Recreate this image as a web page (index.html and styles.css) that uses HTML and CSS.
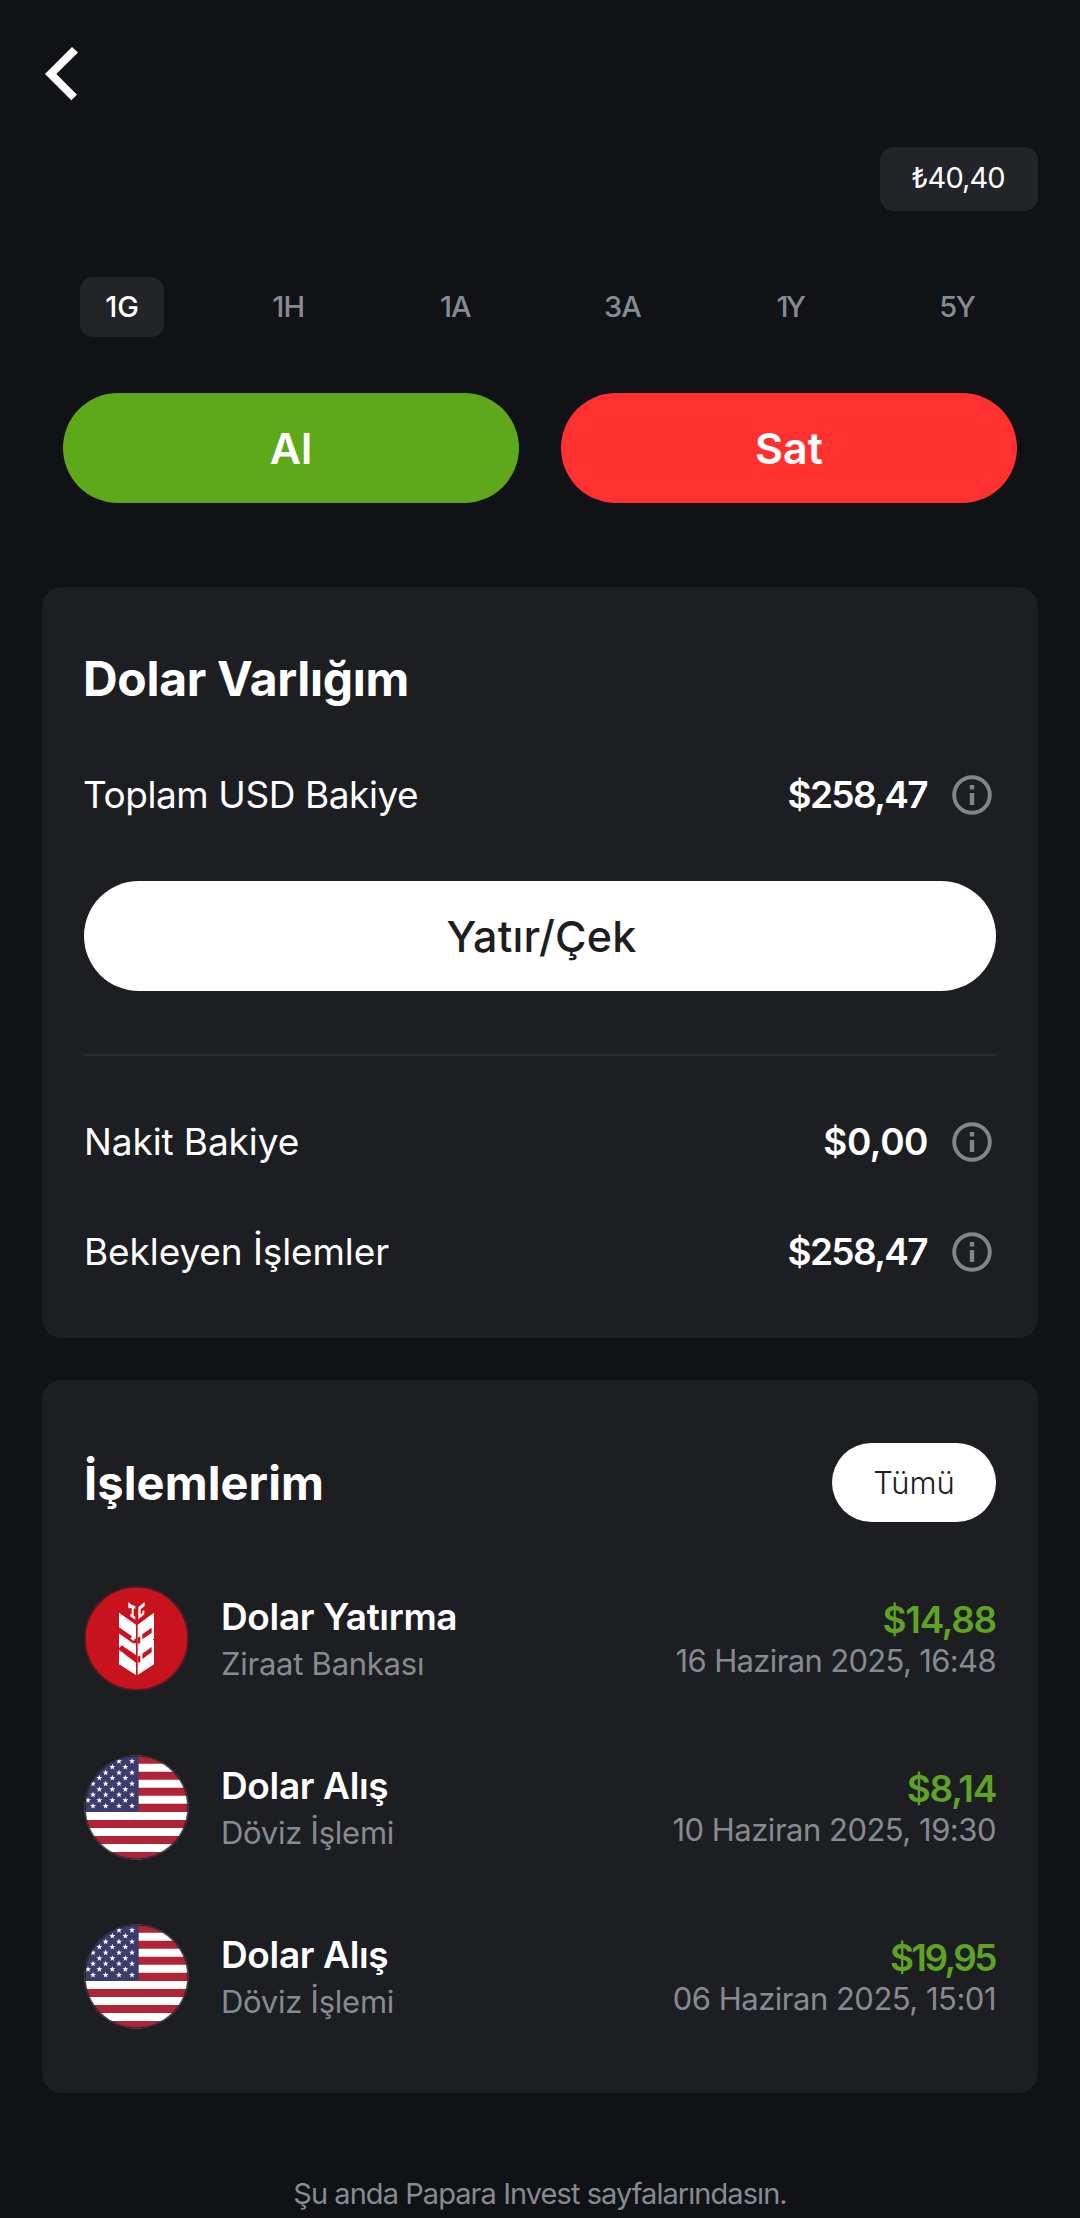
FILE: index.html
```html
<!DOCTYPE html>
<html lang="tr">
<head>
<meta charset="utf-8">
<title>Dolar</title>
<link rel="stylesheet" href="styles.css">
</head>
<body>
<svg class="defs" aria-hidden="true">
  <defs>
    <symbol id="info" viewBox="0 0 40 40">
      <circle cx="20" cy="20" r="17.8" fill="none" stroke="currentColor" stroke-width="3.9"/>
      <path d="M17.800 10h4.400v4.400h-4.400zM17.800 18h4.400v12h-4.400z" fill="currentColor"/>
    </symbol>
    <path id="star" d="M0-9.500 2.300-3 9-2.900 3.600 1.200 5.600 7.700 0 3.800-5.600 7.700-3.600 1.200-9-2.900-2.300-3z" fill="#fff"/>
    <clipPath id="disc"><circle cx="169.500" cy="169.500" r="156"/></clipPath>
    <symbol id="flag" viewBox="12 12 315 315">
      <g clip-path="url(#disc)">
        <path fill="#fff" d="M0 0h340v340H0z"/>
        <path fill="#af2436" d="M0 0h340v38H0zM0 62h340v24H0zM0 110h340v24H0zM0 158h340v25H0zM0 207h340v24H0zM0 255h340v24H0zM0 303h340v37H0z"/>
        <path fill="#3c3b6e" d="M0 0h176v183H0z"/>
        <use href="#star" x="117" y="31"/><use href="#star" x="156" y="31"/>
        <use href="#star" x="97" y="48"/><use href="#star" x="136" y="48"/>
        <use href="#star" x="77" y="65"/><use href="#star" x="117" y="65"/><use href="#star" x="156" y="65"/>
        <use href="#star" x="58" y="81"/><use href="#star" x="97" y="81"/><use href="#star" x="136" y="81"/>
        <use href="#star" x="39" y="98"/><use href="#star" x="77" y="98"/><use href="#star" x="117" y="98"/><use href="#star" x="156" y="98"/>
        <use href="#star" x="58" y="115"/><use href="#star" x="97" y="115"/><use href="#star" x="136" y="115"/>
        <use href="#star" x="39" y="131"/><use href="#star" x="77" y="131"/><use href="#star" x="117" y="131"/><use href="#star" x="156" y="131"/>
        <use href="#star" x="24" y="148"/><use href="#star" x="58" y="148"/><use href="#star" x="97" y="148"/><use href="#star" x="136" y="148"/>
        <use href="#star" x="39" y="165"/><use href="#star" x="77" y="165"/><use href="#star" x="117" y="165"/><use href="#star" x="156" y="165"/>
      </g>
      <circle cx="169.500" cy="169.500" r="154.500" fill="none" stroke="#242429" stroke-opacity=".8" stroke-width="5"/>
    </symbol>
  </defs>
</svg>

<main class="page">
  <header class="topbar">
    <button class="back" aria-label="Geri">
      <svg width="33" height="54" viewBox="0 0 33 54"><path fill="#fff" d="M27 0 33 5.500 11.300 27 32 47.700 26.300 53.300 0 27z"/></svg>
    </button>
  </header>

  <div class="price-row"><span class="price">₺40,40</span></div>

  <nav class="ranges">
    <button class="range active">1G</button>
    <button class="range">1H</button>
    <button class="range">1A</button>
    <button class="range">3A</button>
    <button class="range year">1Y</button>
    <button class="range five">5Y</button>
  </nav>

  <div class="actions">
    <button class="pill buy">Al</button>
    <button class="pill sell">Sat</button>
  </div>

  <section class="card assets">
    <h2>Dolar Varlığım</h2>
    <div class="row total">
      <span class="label">Toplam USD Bakiye</span>
      <strong class="value">$258,47</strong>
      <svg class="info"><use href="#info"/></svg>
    </div>
    <button class="pill transfer">Yatır/Çek</button>
    <hr>
    <div class="row">
      <span class="label">Nakit Bakiye</span>
      <strong class="value zero">$0,00</strong>
      <svg class="info"><use href="#info"/></svg>
    </div>
    <div class="row pending">
      <span class="label">Bekleyen İşlemler</span>
      <strong class="value">$258,47</strong>
      <svg class="info"><use href="#info"/></svg>
    </div>
  </section>

  <section class="card history">
    <div class="card-head">
      <h2>İşlemlerim</h2>
      <button class="all">Tümü</button>
    </div>
    <article class="tx">
      <svg class="avatar" viewBox="12 12 315 315">
        <circle cx="169.500" cy="169.500" r="154.500" fill="#c8131f" stroke="#541b22" stroke-width="5"/>
        <g fill="#fff">
          <path d="M117 92 168 128V279L117 247z"/>
          <path d="M222 92 173 128V279L222 247z"/>
        </g>
        <path d="M141 84 166 120H174L199 84V54H141z" fill="#c8131f"/>
        <g fill="#fff">
          <path d="M145 60 155 69 166 72V80L161 79V101L166 104V113L151 103V96L155 97V78L145 79z"/>
          <path d="M194 60V72L182 82V98L187 94V88L193 84V97L175 112V76z"/>
        </g>
        <g fill="#c8131f">
          <path d="M116 135 156 163 151 170 162 177 164 170H168V184H159L116 154z"/>
          <path d="M116 200 125 190 168 219V242L123 208 119 206z"/>
          <path d="M215 137V153L187 172V157zM215 195V211L187 231V215zM173 167 181 163V182L173 187zM173 224 181 220V240L173 242zM219 171h4v4h-4z"/>
        </g>
      </svg>
      <div class="who"><strong>Dolar Yatırma</strong><span>Ziraat Bankası</span></div>
      <div class="sum"><strong>$14,88</strong><time class="first">16 Haziran 2025, 16:48</time></div>
    </article>
    <article class="tx">
      <svg class="avatar"><use href="#flag"/></svg>
      <div class="who"><strong>Dolar Alış</strong><span>Döviz İşlemi</span></div>
      <div class="sum"><strong>$8,14</strong><time>10 Haziran 2025, 19:30</time></div>
    </article>
    <article class="tx">
      <svg class="avatar"><use href="#flag"/></svg>
      <div class="who"><strong>Dolar Alış</strong><span>Döviz İşlemi</span></div>
      <div class="sum"><strong class="narrow">$19,95</strong><time>06 Haziran 2025, 15:01</time></div>
    </article>
  </section>

  <footer>Şu anda Papara Invest sayfalarındasın.</footer>
</main>
</body>
</html>
```
FILE: styles.css
```css
* {
  box-sizing: border-box;
}

body {
  margin: 0;
  background: #111216;
  color: #fff;
  font-family: Inter, "Liberation Sans", sans-serif;
  overflow: hidden;
}

button {
  padding: 0;
  border: 0;
  background: none;
  color: inherit;
  font: inherit;
}

svg {
  display: block;
}

.defs {
  position: absolute;
  width: 0;
  height: 0;
}

.page {
  height: 2218px;
  padding: 0 42px;
  overflow: hidden;
}

.topbar {
  height: 147px;
  padding: 47px 0 0 3px;
}

.back {
  display: block;
}

.price-row {
  display: flex;
  justify-content: flex-end;
}

.price {
  width: 158px;
  height: 64px;
  padding-right: 2px;
  border-radius: 14px;
  background: #232428;
  font-size: 29px;
  line-height: 62px;
  letter-spacing: -0.9px;
  text-align: center;
}

.ranges {
  display: flex;
  justify-content: space-between;
  margin: 66px 38px 0;
}

.range {
  width: 84px;
  height: 60px;
  padding: 0 2px 1px 0;
  border-radius: 13px;
  color: #868b92;
  font-size: 29px;
  font-weight: 500;
  letter-spacing: -0.8px;
}

.range.active {
  padding-right: 0;
  background: #232428;
  color: #fff;
  letter-spacing: 0;
}

.range.year {
  letter-spacing: -2.8px;
}

.range.five {
  letter-spacing: -1.4px;
}

.actions {
  display: flex;
  gap: 42px;
  margin: 56px 21px 84px;
}

.pill {
  display: block;
  flex: 1;
  height: 110px;
  padding-bottom: 1px;
  border-radius: 55px;
  font-size: 43px;
  font-weight: 600;
  letter-spacing: 0;
}

.buy {
  background: #5ea91a;
}

.sell {
  background: #ff3130;
}

.card {
  border-radius: 20px;
  background: #1d1e22;
}

h2 {
  font-size: 48px;
  font-weight: 700;
  line-height: 60px;
  letter-spacing: -0.3px;
  margin: 0 0 0 -1px;
}

.assets {
  padding: 62px 42px 66px;
}

.row {
  display: flex;
  align-items: center;
  height: 40px;
}

.row.total {
  margin: 66px 0;
}

.row.total .label {
  margin-left: -1px;
  letter-spacing: -0.44px;
}

.row.pending {
  margin-top: 70px;
}

.label {
  flex: 1;
  padding-bottom: 2px;
  font-size: 37px;
  letter-spacing: -0.1px;
}

.value {
  padding-bottom: 2px;
  font-size: 37px;
  font-weight: 600;
  letter-spacing: -1.65px;
}

.row .value {
  margin-right: 1px;
}

.value.zero {
  margin-right: 0;
  letter-spacing: -0.48px;
}

.info {
  width: 40px;
  height: 40px;
  margin: 0 4px 0 24px;
  color: #848587;
}

.transfer {
  width: 100%;
  padding-left: 3px;
  background: #fff;
  color: #1d1e22;
  font-size: 43px;
  font-weight: 500;
  letter-spacing: 0.2px;
}

hr {
  height: 2px;
  margin: 63px 0 66px;
  border: 0;
  background: #2a2b2f;
}

.history {
  margin-top: 42px;
  padding: 63px 42px 64px;
}

.card-head {
  display: flex;
  align-items: center;
  justify-content: space-between;
}

.card-head h2 {
  margin-left: 0;
  font-size: 47px;
  letter-spacing: 0.1px;
}

.all {
  width: 164px;
  height: 79px;
  border-radius: 40px;
  background: #fff;
  color: #1d1e22;
  font-size: 31px;
  font-weight: 300;
  letter-spacing: 0;
}

.tx {
  display: flex;
  align-items: center;
  height: 105px;
  margin-top: 64px;
}

.avatar {
  width: 105px;
  height: 105px;
}

.who,
.sum {
  display: flex;
  flex-direction: column;
  padding-top: 3px;
  line-height: 47px;
}

.who {
  flex: 1;
  padding-left: 32px;
}

.who strong {
  font-size: 37px;
  font-weight: 600;
  letter-spacing: -0.35px;
}

.who span {
  color: #868b92;
  font-size: 31px;
  letter-spacing: -0.25px;
}

.sum {
  align-items: flex-end;
  line-height: 41px;
}

.sum strong {
  color: #5ea324;
  font-size: 37px;
  font-weight: 600;
  letter-spacing: -1.32px;
}

.sum strong.narrow {
  margin-right: 1px;
  letter-spacing: -2.6px;
}

.sum time {
  color: #868b92;
  font-size: 31px;
  letter-spacing: -0.5px;
}

.sum time.first {
  letter-spacing: -0.65px;
}

footer {
  margin-top: 81px;
  color: #868b92;
  font-size: 29px;
  line-height: 40px;
  letter-spacing: -0.94px;
  text-align: center;
}
```
